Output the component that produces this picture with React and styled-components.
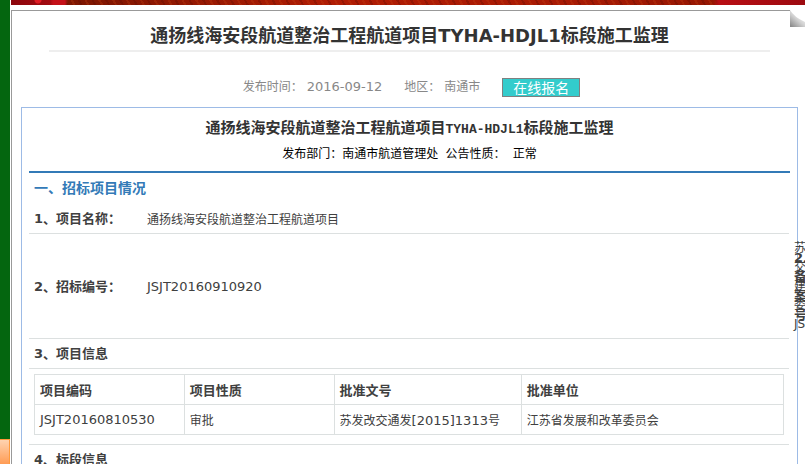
import React from "react";
import styled, { createGlobalStyle } from "styled-components";

const GlobalStyle = createGlobalStyle`
  * {
    box-sizing: border-box;
  }

  body {
    margin: 0;
    background: #fff;
    color: #404040;
    font-family: "DejaVu Sans", "Noto Sans CJK SC", sans-serif;
    font-size: 12px;
  }
`;

const cjkFirst = `"Noto Sans CJK SC", sans-serif`;

const Page = styled.div`
  display: flex;
  gap: 1px;
  height: 100vh;
  overflow: hidden;
`;

const SideStrip = styled.aside`
  flex: 0 0 10px;
  display: flex;
  flex-direction: column;
  justify-content: flex-end;
  background: #04660f;
`;

const SideTab = styled.div`
  height: 25px;
  border-top: 1px solid #ff9a3c;
  border-right: 1px solid #ff9a3c;
  background: linear-gradient(#ffd3b0, #ff9c55);
`;

const Content = styled.div`
  flex: 1;
  min-width: 0;
  display: flex;
  flex-direction: column;
  gap: 5px;
`;

const Banner = styled.div`
  flex: 0 0 5px;
  background:
    radial-gradient(circle at 27px 0, #e01c24 3px, transparent 4px),
    radial-gradient(circle at 48px 2px, #c41018 6px, transparent 9px),
    linear-gradient(90deg, #8c060c 0, #a80c12 50px, transparent 54px),
    linear-gradient(270deg, #9c0a10 0, #b80e14 86px, transparent 92px),
    repeating-linear-gradient(
      60deg,
      rgba(90, 10, 0, 0.3) 0 2px,
      transparent 2px 6px,
      rgba(200, 70, 20, 0.25) 6px 8px,
      transparent 8px 12px
    ),
    linear-gradient(90deg, #701400, #b01c04 40%, #a81a04 70%, #8a1402);
`;

const Panel = styled.main`
  position: relative;
  flex: 1;
  padding: 0 7px 0 9px;
  border-top: 1px solid #999;
  border-left: 1px solid #999;
`;

const Curl = styled.svg`
  position: absolute;
  top: -1px;
  right: 0;
`;

const PageTitle = styled.h1`
  margin: 0 28px;
  padding-top: 10px;
  border-bottom: 2px solid #eee;
  color: #333;
  font-size: 18px;
  line-height: 29px;
  text-align: center;
`;

const Meta = styled.div`
  display: flex;
  justify-content: center;
  align-items: center;
  gap: 22px;
  height: 20px;
  margin: 25px 0 10px;
  padding-left: 4px;
  color: #888;
`;

const MetaItem = styled.span`
  display: flex;
  align-items: center;
  gap: 4px;
  height: 18px;
  line-height: 16px;
`;

const Latin = styled.span`
  font-size: 13px;
`;

const SignUp = styled.button`
  width: 78px;
  height: 19px;
  padding: 0;
  border: 1px solid #808080;
  background: #33cccc;
  color: #fff;
  font-family: ${cjkFirst};
  font-size: 14px;
  line-height: 17px;
`;

const Notice = styled.section`
  min-height: 100%;
  padding: 9px 7px 0;
  border: 1px solid #9dbbe6;
`;

const NoticeHead = styled.header`
  height: 56px;
  border-bottom: 2px solid #337ab7;
  text-align: center;
`;

const NoticeTitle = styled.h2`
  margin: 0;
  color: #333;
  font-family: "Liberation Mono", "Noto Sans CJK SC", monospace;
  font-size: 15px;
  line-height: 26px;
`;

const Code = styled.span`
  font-size: 13px;
`;

const Department = styled.p`
  margin: 0;
  color: #000;
  font-family: "Liberation Mono", "Noto Sans CJK SC", monospace;
  line-height: 25px;
  white-space: pre;
`;

const SectionTitle = styled.h3`
  margin: 0;
  padding-left: 5px;
  color: #337ab7;
  font-size: 14px;
  line-height: 31px;
`;

const Row = styled.div`
  position: relative;
  display: grid;
  grid-template-columns: 113px 1fr;
  align-items: center;
  min-height: ${(props) => (props.$tall ? "105px" : "30px")};
  margin-right: 1px;
  padding-left: 5px;
  border-bottom: 1px solid #dce0e0;
`;

const Label = styled.span`
  font-size: 13px;
  font-weight: bold;
  line-height: 29px;
  white-space: nowrap;
`;

const Value = styled.span`
  font-size: ${(props) => (props.$latin ? "13px" : "12px")};
`;

// columns pushed out past the right edge, one character per line
const Spill = styled.div`
  position: absolute;
  top: ${(props) => (props.$bold ? "14px" : "5px")};
  left: calc(100% + 5px);
  width: 13px;
  font-size: ${(props) => (props.$bold ? "13px" : "12px")};
  font-weight: ${(props) => (props.$bold ? "bold" : "normal")};
  line-height: 19px;
`;

const TableWrap = styled.div`
  margin-right: 1px;
  padding: 5px 5px 9px;
  border-bottom: 1px solid #dce0e0;
`;

const Table = styled.table`
  width: 100%;
  table-layout: fixed;
  border-collapse: collapse;
  text-align: left;

  th,
  td {
    height: 30px;
    padding: 0 5px;
    border: 1px solid #dce0e0;
  }

  th {
    font-size: 13px;
  }
`;

const columns = [
  { name: "项目编码", width: "20%" },
  { name: "项目性质", width: "20%" },
  { name: "批准文号", width: "25%" },
  { name: "批准单位", width: "35%" },
];

const App = () => {
  return (
    <Page>
      <GlobalStyle />
      <SideStrip>
        <SideTab />
      </SideStrip>
      <Content>
        <Banner />
        <Panel>
          <Curl width="15" height="17" viewBox="0 0 15 17" aria-hidden="true">
            <defs>
              <linearGradient id="curl" x1="0.1" y1="1" x2="0.8" y2="0.1">
                <stop offset="0" stopColor="#8a8a8a" />
                <stop offset="0.5" stopColor="#d0d0d0" />
                <stop offset="1" stopColor="#fff" />
              </linearGradient>
            </defs>
            <rect width="15" height="17" fill="#fff" />
            <path d="M0 0 Q4 7 15 12 V17 H0 Z" fill="url(#curl)" />
          </Curl>
          <PageTitle>
            通扬线海安段航道整治工程航道项目TYHA-HDJL1标段施工监理
          </PageTitle>
          <Meta>
            <MetaItem>
              发布时间： <Latin>2016-09-12</Latin>
            </MetaItem>
            <MetaItem>
              地区： <span>南通市</span>
            </MetaItem>
            <SignUp type="button">在线报名</SignUp>
          </Meta>
          <Notice>
            <NoticeHead>
              <NoticeTitle>
                通扬线海安段航道整治工程航道项目<Code>TYHA-HDJL1</Code>
                标段施工监理
              </NoticeTitle>
              <Department>
                发布部门：南通市航道管理处 公告性质： 正常
              </Department>
            </NoticeHead>
            <SectionTitle>一、招标项目情况</SectionTitle>
            <Row>
              <Label>1、项目名称：</Label>
              <Value>通扬线海安段航道整治工程航道项目</Value>
            </Row>
            <Row $tall>
              <Label>2、招标编号：</Label>
              <Value $latin>JSJT20160910920</Value>
              <Spill>苏交建委JS</Spill>
              <Spill $bold>2、备案号</Spill>
            </Row>
            <Row>
              <Label>3、项目信息</Label>
            </Row>
            <TableWrap>
              <Table>
                <thead>
                  <tr>
                    {columns.map((column) => (
                      <th key={column.name} style={{ width: column.width }}>
                        {column.name}
                      </th>
                    ))}
                  </tr>
                </thead>
                <tbody>
                  <tr>
                    <td>
                      <Latin>JSJT20160810530</Latin>
                    </td>
                    <td>审批</td>
                    <td>
                      苏发改交通发<Latin>[2015]1313</Latin>号
                    </td>
                    <td>江苏省发展和改革委员会</td>
                  </tr>
                </tbody>
              </Table>
            </TableWrap>
            <Row>
              <Label>4、标段信息</Label>
            </Row>
          </Notice>
        </Panel>
      </Content>
    </Page>
  );
};

export default App;
